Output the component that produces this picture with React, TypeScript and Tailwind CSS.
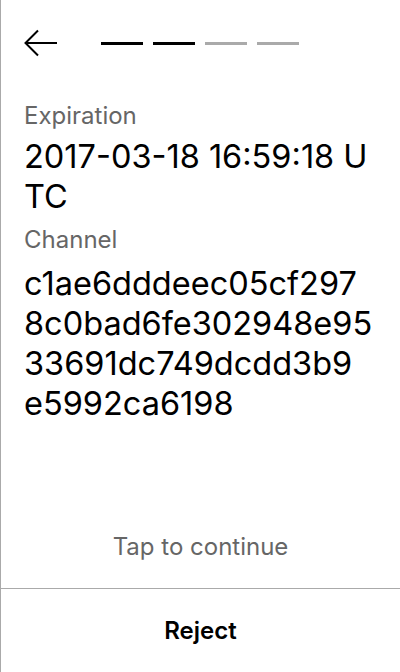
export default function App() {
  const font = { fontFamily: "Inter, 'Noto Sans', sans-serif" };
  const channel = ["c1ae6dddeec05cf297", "8c0bad6fe302948e95", "33691dc749dcdd3b9", "e5992ca6198"];
  return (
    <div style={font} className="w-[400px] h-[672px] bg-white border-l border-[#aaaaaa] flex flex-col text-black">
      <div className="h-[86px] flex items-center pl-[23px]">
        <svg width="34" height="28" viewBox="0 0 34 28" fill="none" stroke="black" strokeWidth="2">
          <path d="M33 14H2" />
          <path d="M14 1.5L1.5 14L14 26.5" />
        </svg>
        <div className="flex gap-[10px] ml-[43px]">
          <div className="w-[42px] h-[3px] bg-black" />
          <div className="w-[42px] h-[3px] bg-black" />
          <div className="w-[42px] h-[3px] bg-[#aaaaaa]" />
          <div className="w-[42px] h-[3px] bg-[#aaaaaa]" />
        </div>
      </div>
      <div className="flex-1 pl-[23px] pr-[24px] pt-[16px]">
        <div className="text-[24px] leading-[28px] text-[#666666]">Expiration</div>
        <div className="mt-[7px] text-[32.5px] leading-[40px] break-all">2017-03-18 16:59:18 UTC</div>
        <div className="mt-[9px] text-[24px] leading-[28px] text-[#666666]">Channel</div>
        <div className="mt-[10px] text-[32.5px] leading-[40px] break-all">
          {channel.map((line) => (
            <div key={line}>{line}</div>
          ))}
        </div>
      </div>
      <div className="text-center text-[24px] leading-[28px] text-[#666666] pb-[27px]">Tap to continue</div>
      <div className="border-t border-[#aaaaaa] h-[84px] flex items-center justify-center">
        <span className="text-[24px] font-semibold">Reject</span>
      </div>
    </div>
  );
}
